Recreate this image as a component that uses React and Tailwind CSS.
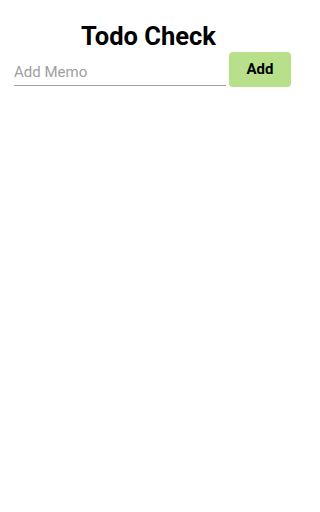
export default function App() {
  return (
    <div className="w-[297px] min-h-[512px] bg-white" style={{ fontFamily: "Roboto, sans-serif" }}>
      <h1 className="pt-[20px] text-center text-[25.5px] leading-[32px] font-bold text-black">Todo Check</h1>
      <div className="flex items-start px-[14px] pr-[6px]">
        <div className="flex-1 border-b border-[#9e9e9e] h-[34px] flex items-end pb-[3px]">
          <input
            className="w-full outline-none text-[15px] leading-[20px] text-black placeholder:text-[#9e9e9e] bg-transparent"
            placeholder="Add Memo"
          />
        </div>
        <button className="ml-[3px] w-[62px] h-[35px] rounded-[4px] bg-[#b8e08a] text-[15px] font-bold text-black">
          Add
        </button>
      </div>
    </div>
  );
}
